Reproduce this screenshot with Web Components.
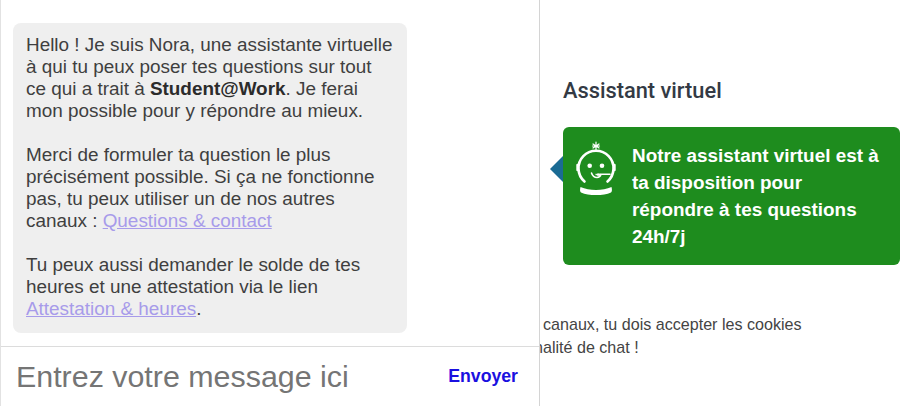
<!DOCTYPE html>
<html lang="fr">
<head>
<meta charset="utf-8">
<title>Assistant virtuel</title>
<style>
  html, body { margin: 0; padding: 0; background: #fff; }
  body { width: 908px; height: 406px; overflow: hidden; display: flex; }
</style>
</head>
<body>
<chat-panel>
  <chat-bubble>
    <p>Hello ! Je suis Nora, une assistante virtuelle à qui tu peux poser tes questions sur tout ce qui a trait à <b>Student@Work</b>. Je ferai mon possible pour y répondre au mieux.</p>
    <p>Merci de formuler ta question le plus précisément possible. Si ça ne fonctionne pas, tu peux utiliser un de nos autres canaux : <a href="#">Questions &amp; contact</a></p>
    <p>Tu peux aussi demander le solde de tes heures et une attestation via le lien <a href="#">Attestation &amp; heures</a>.</p>
  </chat-bubble>
  <chat-input placeholder="Entrez votre message ici" label="Envoyer"></chat-input>
</chat-panel>
<info-panel heading="Assistant virtuel">
  <promo-card>Notre assistant virtuel est à ta disposition pour répondre à tes questions 24h/7j</promo-card>
</info-panel>

<script>
class ChatPanel extends HTMLElement {
    constructor() {
        super();
        this.attachShadow({ mode: 'open' });
    }

    connectedCallback() {
        this.shadowRoot.innerHTML = `
        <style>
        :host {
            display: flex;
            flex-direction: column;
            flex: none;
            box-sizing: border-box;
            width: 540px;
            height: 406px;
            border-left: 1px solid #e2e2e2;
            border-right: 1px solid #d4d4d4;
            background: #fff;
        }
        </style>
        <slot></slot>`;
    }
}

class ChatBubble extends HTMLElement {
    constructor() {
        super();
        const root = this.attachShadow({ mode: 'open' });
        root.innerHTML = `
        <style>
        :host {
            display: block;
            box-sizing: border-box;
            width: 394px;
            height: 310px;
            margin: 23px 0 13px 12px;
            padding: 11px 13px;
            background: #efefef;
            border-radius: 8px;
            font: 18.900px/22px "Liberation Sans", Arial, sans-serif;
            color: #3f3f3f;
        }
        </style>
        <slot></slot>`;
    }
}

class ChatInput extends HTMLElement {
    constructor() {
        super();
        this.attachShadow({ mode: 'open' });
    }

    connectedCallback() {
        this.shadowRoot.innerHTML = `
        <style>
        :host {
            display: flex;
            flex: 1;
            align-items: center;
            justify-content: space-between;
            border-top: 1px solid #dcdcdc;
            padding: 0 21px 0 15px;
        }
        .placeholder {
            font: 30.400px "Liberation Sans", Arial, sans-serif;
            color: #757575;
        }
        button {
            border: 0;
            padding: 0;
            background: none;
            font: bold 17.700px "Liberation Sans", Arial, sans-serif;
            color: #1a10e0;
        }
        </style>
        <span class="placeholder">${this.getAttribute('placeholder')}</span>
        <button type="button">${this.getAttribute('label')}</button>`;
    }
}

class InfoPanel extends HTMLElement {
    constructor() {
        super();
        this.attachShadow({ mode: 'open' });
    }

    connectedCallback() {
        this.shadowRoot.innerHTML = `
        <style>
        :host {
            display: flex;
            flex-direction: column;
            flex: 1;
            min-width: 0;
            overflow: hidden;
            color: #444;
        }
        h2 {
            margin: 79px 0 24px 23px;
            font: 500 21.800px/24px Roboto, sans-serif;
            color: #333a44;
        }
        .cookies {
            margin: 48px 0 0 3px;
            font: 16.100px/23px "Liberation Sans", Arial, sans-serif;
            white-space: nowrap;
        }
        .cookies span {
            display: block;
        }
        .cookies span + span {
            margin-left: -9px;
        }
        </style>
        <h2>${this.getAttribute('heading')}</h2>
        <slot></slot>
        <p class="cookies"><span>canaux, tu dois accepter les cookies</span><span>nalité de chat !</span></p>`;
    }
}

class PromoCard extends HTMLElement {
    constructor() {
        super();
        const root = this.attachShadow({ mode: 'open' });
        root.innerHTML = `
        <style>
        :host {
            display: flex;
            box-sizing: border-box;
            position: relative;
            width: 337px;
            height: 138px;
            margin-left: 23px;
            padding: 14px 0 0 12px;
            gap: 15px;
            background: #1e8c1e;
            border-radius: 6px;
            font: bold 18.900px/27px "Liberation Sans", Arial, sans-serif;
            color: #fff;
        }
        :host::before {
            content: "";
            position: absolute;
            left: -13px;
            top: 29px;
            width: 26px;
            height: 26px;
            background: #1b6b94;
            clip-path: polygon(0 50%, 50% 0, 50% 100%);
        }
        svg {
            flex: none;
            width: 42px;
            height: 58px;
        }
        .text {
            width: 252px;
            padding-top: 1px;
        }
        </style>
        <svg viewBox="0 0 42 58" fill="none" stroke="#fff" stroke-linecap="round">
            <path d="M21 1v8M18 3l6 4M24 3l-6 4M17.500 5h7" stroke-width="1.200"/>
            <path d="M9.500 40.500a17.500 17.500 0 1 1 23 0" stroke-width="2.600"/>
            <path d="M2.500 24v5M39.500 24v5" stroke-width="2.400"/>
            <circle cx="14.700" cy="24.700" r="2.300" fill="#fff" stroke="none"/>
            <circle cx="27" cy="24.700" r="2.300" fill="#fff" stroke="none"/>
            <path d="M16.500 32c1 3 3 4.500 5.500 4.500 2 0 3.500-1.500 4-3.200h9" stroke-width="1.600"/>
            <path d="M21 33.500c1.500-1 3-1 5-.2-1 1.500-3.500 1.800-5 .2z" fill="#fff" stroke="#fff" stroke-width=".8"/>
            <path d="M5.500 46c9 4 22 4 31 0 .8 3 .5 4.500-.5 5.500-4 2-9 2.500-15 2.500S10 53.500 6 51.500c-1-1-1.300-2.500-.5-5.500z" fill="#fff" stroke="none"/>
        </svg>
        <div class="text"><slot></slot></div>`;
    }
}

customElements.define('chat-panel', ChatPanel);
customElements.define('chat-bubble', ChatBubble);
customElements.define('chat-input', ChatInput);
customElements.define('info-panel', InfoPanel);
customElements.define('promo-card', PromoCard);
</script>
<style>
  chat-bubble p { margin: 0 0 22px; }
  chat-bubble p:last-child { margin-bottom: 0; }
  chat-bubble a { color: #a79bea; }
  chat-bubble b { color: #2b2b2b; }
</style>
</body>
</html>
